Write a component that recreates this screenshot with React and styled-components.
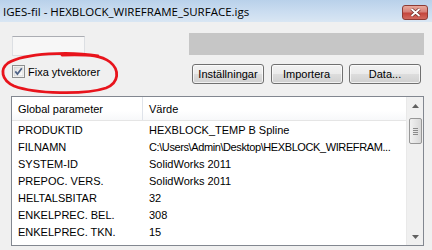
import React from "react";
import styled, { createGlobalStyle } from "styled-components";

const GlobalStyle = createGlobalStyle`
  html, body {
    margin: 0;
    padding: 0;
    background: #f0f0f0;
  }
  body {
    font-family: "Liberation Sans", Arial, sans-serif;
  }
`;

const Window = styled.div`
  position: relative;
  width: 432px;
  height: 250px;
  overflow: hidden;
  background: #f0f0f0;
  display: flex;
  flex-direction: column;
`;

const TitleBar = styled.div`
  height: 22px;
  display: flex;
  align-items: center;
  justify-content: space-between;
  padding: 0 4px 0 3px;
  background: linear-gradient(#b9d1ea, #c9dcf0 50%, #d9e6f3);
  box-sizing: border-box;
`;

const Title = styled.span`
  font-family: "Open Sans", "Noto Sans", sans-serif;
  font-size: 11.5px;
  color: #000;
  margin-top: 1px;
`;

const CloseButton = styled.div`
  width: 26px;
  height: 15px;
  margin-top: 2px;
  border: 1px solid #8d3b35;
  border-radius: 3px;
  box-sizing: border-box;
  background: linear-gradient(#e9a99b, #d7817a 45%, #c4463d 55%, #d2695e);
  display: flex;
  align-items: center;
  justify-content: center;
`;

const Body = styled.div`
  flex: 1;
  display: flex;
  flex-direction: column;
  padding: 0 8px 4px 11px;
`;

const TopArea = styled.div`
  display: flex;
  justify-content: space-between;
`;

const LeftCol = styled.div`
  display: flex;
  flex-direction: column;
  padding-left: 1px;
`;

const EditBox = styled.div`
  width: 73px;
  height: 20px;
  margin-top: 14px;
  box-sizing: border-box;
  border: 1px solid #dcdfe3;
  border-top-color: #abadb3;
  background: #f7f7f7;
`;

const CheckRow = styled.label`
  display: flex;
  align-items: center;
  gap: 3px;
  margin-top: 9px;
  font-size: 11px;
  color: #000;
`;

const RightCol = styled.div`
  width: 235px;
  display: flex;
  flex-direction: column;
`;

const ProgressBar = styled.div`
  height: 22px;
  margin-top: 11px;
  background: #c6c6c6;
`;

const ButtonRow = styled.div`
  display: flex;
  justify-content: space-between;
  margin-top: 9px;
  padding-left: 3px;
  padding-right: 3px;
`;

const Button = styled.div`
  width: 72px;
  height: 20px;
  box-sizing: border-box;
  border: 1px solid #707070;
  border-radius: 3px;
  background: linear-gradient(#f2f2f2, #ebebeb 48%, #dddddd 52%, #cfcfcf);
  box-shadow: inset 0 0 0 1px rgba(255, 255, 255, 0.7);
  display: flex;
  align-items: center;
  justify-content: center;
  font-size: 11px;
  color: #000;
`;

const ListView = styled.div`
  margin-top: 12px;
  height: 150px;
  box-sizing: border-box;
  border: 1px solid #828790;
  background: #fff;
  display: flex;
`;

const ListMain = styled.div`
  flex: 1;
  min-width: 0;
  display: flex;
  flex-direction: column;
`;

const HeaderRow = styled.div`
  height: 24px;
  display: flex;
  align-items: center;
  border-bottom: 1px solid #e5e5e5;
  box-sizing: border-box;
  background: linear-gradient(#ffffff, #ffffff 60%, #f7f8fa);
`;

const HeaderCell = styled.div`
  width: ${p => p.width || "auto"};
  flex: ${p => (p.width ? "none" : "1")};
  height: 100%;
  box-sizing: border-box;
  padding-left: 6px;
  display: flex;
  align-items: center;
  font-size: 11px;
  color: #000;
  border-right: ${p => (p.divider ? "1px solid #dfe3ea" : "none")};
`;

const Row = styled.div`
  height: 17px;
  display: flex;
  align-items: center;
  font-size: 11px;
  color: #000;
`;

const Cell = styled.div`
  width: ${p => p.width || "auto"};
  flex: ${p => (p.width ? "none" : "1")};
  min-width: 0;
  padding-left: 6px;
  box-sizing: border-box;
  white-space: nowrap;
  overflow: hidden;
  letter-spacing: ${p => (p.tight ? "-0.4px" : "normal")};
`;

const ScrollBar = styled.div`
  width: 17px;
  display: flex;
  flex-direction: column;
  align-items: center;
  background: #f0f0f0;
  border-left: 1px solid #e9e9e9;
  box-sizing: border-box;
`;

const ArrowBox = styled.div`
  height: 17px;
  width: 100%;
  display: flex;
  align-items: center;
  justify-content: center;
`;

const Thumb = styled.div`
  width: 13px;
  height: 26px;
  margin-top: 4px;
  box-sizing: border-box;
  border: 1px solid #979797;
  border-radius: 2px;
  background: linear-gradient(90deg, #f1f1f1, #e5e5e5 50%, #d8d8d8);
  display: flex;
  flex-direction: column;
  align-items: center;
  justify-content: center;
  gap: 1px;
`;

const Grip = styled.span`
  width: 5px;
  height: 1px;
  background: #8a8a8a;
`;

const Spacer = styled.div`
  flex: 1;
`;

const Annotation = styled.svg`
  position: absolute;
  left: 0;
  top: 0;
  pointer-events: none;
`;

const rows = [
  ["PRODUKTID", "HEXBLOCK_TEMP B Spline"],
  ["FILNAMN", "C:\\Users\\Admin\\Desktop\\HEXBLOCK_WIREFRAM...", true],
  ["SYSTEM-ID", "SolidWorks 2011"],
  ["PREPOC. VERS.", "SolidWorks 2011"],
  ["HELTALSBITAR", "32"],
  ["ENKELPREC. BEL.", "308"],
  ["ENKELPREC. TKN.", "15"],
];

const CheckBox = () => (
  <svg width="13" height="13" viewBox="0 0 13 13">
    <defs>
      <linearGradient id="cbg" x1="0" y1="0" x2="1" y2="1">
        <stop offset="0" stopColor="#dcdcdc" />
        <stop offset="1" stopColor="#ffffff" />
      </linearGradient>
    </defs>
    <rect x="0.5" y="0.5" width="12" height="12" fill="#fff" stroke="#8e8f8f" />
    <rect x="2" y="2" width="9" height="9" fill="url(#cbg)" stroke="#c6c6c6" strokeWidth="0.6" />
    <path d="M3.3 6.4 L5.4 9 L9.8 3.2" fill="none" stroke="#4d6185" strokeWidth="1.7" />
  </svg>
);

const App = () => (
  <Window>
    <GlobalStyle />
    <TitleBar>
      <Title>IGES-fil - HEXBLOCK_WIREFRAME_SURFACE.igs</Title>
      <CloseButton>
        <svg width="11" height="9" viewBox="0 0 11 9">
          <path d="M1.5 1 L9.5 8 M9.5 1 L1.5 8" stroke="#6b2a26" strokeWidth="3.2" />
          <path d="M1.5 1 L9.5 8 M9.5 1 L1.5 8" stroke="#ffffff" strokeWidth="1.8" />
        </svg>
      </CloseButton>
    </TitleBar>
    <Body>
      <TopArea>
        <LeftCol>
          <EditBox />
          <CheckRow>
            <CheckBox />
            Fixa ytvektorer
          </CheckRow>
        </LeftCol>
        <RightCol>
          <ProgressBar />
          <ButtonRow>
            <Button>Inställningar</Button>
            <Button>Importera</Button>
            <Button>Data...</Button>
          </ButtonRow>
        </RightCol>
      </TopArea>
      <ListView>
        <ListMain>
          <HeaderRow>
            <HeaderCell width="131px" divider>Global parameter</HeaderCell>
            <HeaderCell>Värde</HeaderCell>
          </HeaderRow>
          {rows.map(([k, v, tight]) => (
            <Row key={k}>
              <Cell width="131px">{k}</Cell>
              <Cell tight={tight}>{v}</Cell>
            </Row>
          ))}
        </ListMain>
        <ScrollBar>
          <ArrowBox>
            <svg width="7" height="4" viewBox="0 0 7 4">
              <path d="M0 4 L3.5 0 L7 4 Z" fill="#606060" />
            </svg>
          </ArrowBox>
          <Thumb>
            <Grip />
            <Grip />
            <Grip />
            <Grip />
          </Thumb>
          <Spacer />
          <ArrowBox>
            <svg width="7" height="4" viewBox="0 0 7 4">
              <path d="M0 0 L7 0 L3.5 4 Z" fill="#606060" />
            </svg>
          </ArrowBox>
        </ScrollBar>
      </ListView>
    </Body>
    <Annotation width="432" height="250" viewBox="0 0 432 250">
      <path
        d="M98 56 C70 51, 25 53, 8 63 C0 69, 1 80, 14 86 C35 94, 85 95, 106 88 C119 83, 120 70, 110 62 C102 56, 92 54, 62 55"
        fill="none"
        stroke="#e8141c"
        strokeWidth="2.8"
        strokeLinecap="round"
      />
    </Annotation>
  </Window>
);

export default App;
